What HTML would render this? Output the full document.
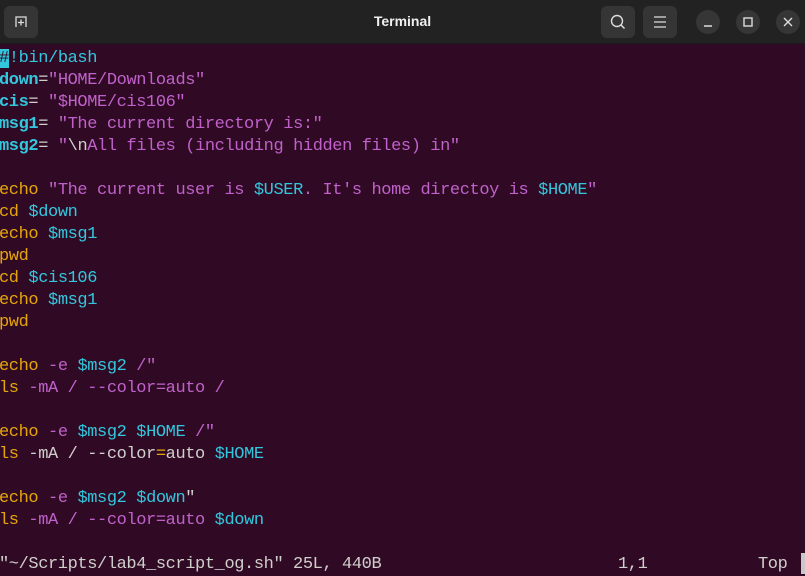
<!DOCTYPE html>
<html><head><meta charset="utf-8"><style>
*{margin:0;padding:0;box-sizing:border-box}
body{width:805px;height:574px;overflow:hidden;background:#300a24;position:relative;font-family:"Liberation Mono","DejaVu Sans Mono",monospace}
#tb{position:absolute;left:0;top:0;width:805px;height:44px;background:#222222;border-bottom:1px solid #1a1a1a}
.btn{position:absolute;top:6px;width:34px;height:32px;background:#353535;border-radius:6px}
.cb{position:absolute;top:10px;width:24px;height:24px;background:#363636;border-radius:50%}
#title{position:absolute;left:0;width:805px;top:13px;text-align:center;color:#f0f0f0;font:bold 14px "Liberation Sans",sans-serif}
.l{position:absolute;left:-1px;height:22px;line-height:22px;font-size:17px;letter-spacing:-0.4px;white-space:pre;color:#d0cfcc}
.c{color:#33c7de}.m{color:#c061cb}.o{color:#e5a50a}.w{color:#d0cfcc}.b{font-weight:bold}
.cur{background:#33c7de;color:#300a24}
</style></head><body>
<div id="tb">
<div class="btn" style="left:4px">
<svg width="34" height="32" viewBox="0 0 34 32"><path d="M12 21V11h10v10" fill="none" stroke="#ddd" stroke-width="1.3"/><path d="M17 13.5v6M14 16.5h6" stroke="#ddd" stroke-width="1.3"/></svg></div>
<div id="title">Terminal</div>
<div class="btn" style="left:601px"><svg width="34" height="32" viewBox="0 0 34 32"><circle cx="16" cy="15" r="5.5" fill="none" stroke="#ddd" stroke-width="1.4"/><path d="M20 19l3.5 3.5" stroke="#ddd" stroke-width="1.5"/></svg></div>
<div class="btn" style="left:643px"><svg width="34" height="32" viewBox="0 0 34 32"><path d="M11 11h12M11 16h12M11 21h12" stroke="#ddd" stroke-width="1.3"/></svg></div>
<div class="cb" style="left:696px"><svg width="24" height="24"><path d="M8 16h8" stroke="#ddd" stroke-width="1.5"/></svg></div>
<div class="cb" style="left:736px"><svg width="24" height="24"><rect x="8" y="8" width="8" height="8" fill="none" stroke="#ddd" stroke-width="1.4"/></svg></div>
<div class="cb" style="left:776px"><svg width="24" height="24"><path d="M8 8l8 8M16 8l-8 8" stroke="#ddd" stroke-width="1.4"/></svg></div>
</div>
<div class="l" style="top:48px"><span class="cur">#</span><span class="c">!bin/bash</span></div>
<div class="l" style="top:70px"><span class="c b">down</span>=<span class="m">"HOME/Downloads"</span></div>
<div class="l" style="top:92px"><span class="c b">cis</span>= <span class="m">"$HOME/cis106"</span></div>
<div class="l" style="top:114px"><span class="c b">msg1</span>= <span class="m">"The current directory is:"</span></div>
<div class="l" style="top:136px"><span class="c b">msg2</span>= <span class="m">"</span><span class="w">\n</span><span class="m">All files (including hidden files) in"</span></div>
<div class="l" style="top:180px"><span class="o">echo</span> <span class="m">"The current user is </span><span class="c">$USER</span><span class="m">. It's home directoy is </span><span class="c">$HOME</span><span class="m">"</span></div>
<div class="l" style="top:202px"><span class="o">cd</span> <span class="c">$down</span></div>
<div class="l" style="top:224px"><span class="o">echo</span> <span class="c">$msg1</span></div>
<div class="l" style="top:246px"><span class="o">pwd</span></div>
<div class="l" style="top:268px"><span class="o">cd</span> <span class="c">$cis106</span></div>
<div class="l" style="top:290px"><span class="o">echo</span> <span class="c">$msg1</span></div>
<div class="l" style="top:312px"><span class="o">pwd</span></div>
<div class="l" style="top:356px"><span class="o">echo</span> <span class="m">-e</span> <span class="c">$msg2</span> <span class="m">/"</span></div>
<div class="l" style="top:378px"><span class="o">ls</span> <span class="m">-mA / --color=auto /</span></div>
<div class="l" style="top:422px"><span class="o">echo</span> <span class="m">-e</span> <span class="c">$msg2 $HOME</span> <span class="m">/"</span></div>
<div class="l" style="top:444px"><span class="o">ls</span> <span class="w">-mA / --color</span><span class="o">=</span><span class="w">auto</span> <span class="c">$HOME</span></div>
<div class="l" style="top:488px"><span class="o">echo</span> <span class="m">-e</span> <span class="c">$msg2 $down</span><span class="w">"</span></div>
<div class="l" style="top:510px"><span class="o">ls</span> <span class="m">-mA / --color=auto</span> <span class="c">$down</span></div>
<div class="l" style="top:554px">"~/Scripts/lab4_script_og.sh" 25L, 440B</div>
<div class="l" style="top:554px;left:618px">1,1</div>
<div class="l" style="top:554px;left:758px">Top</div>
<div style="position:absolute;left:801px;top:553px;width:4px;height:21px;background:#c8c8c8"></div>
</body></html>
